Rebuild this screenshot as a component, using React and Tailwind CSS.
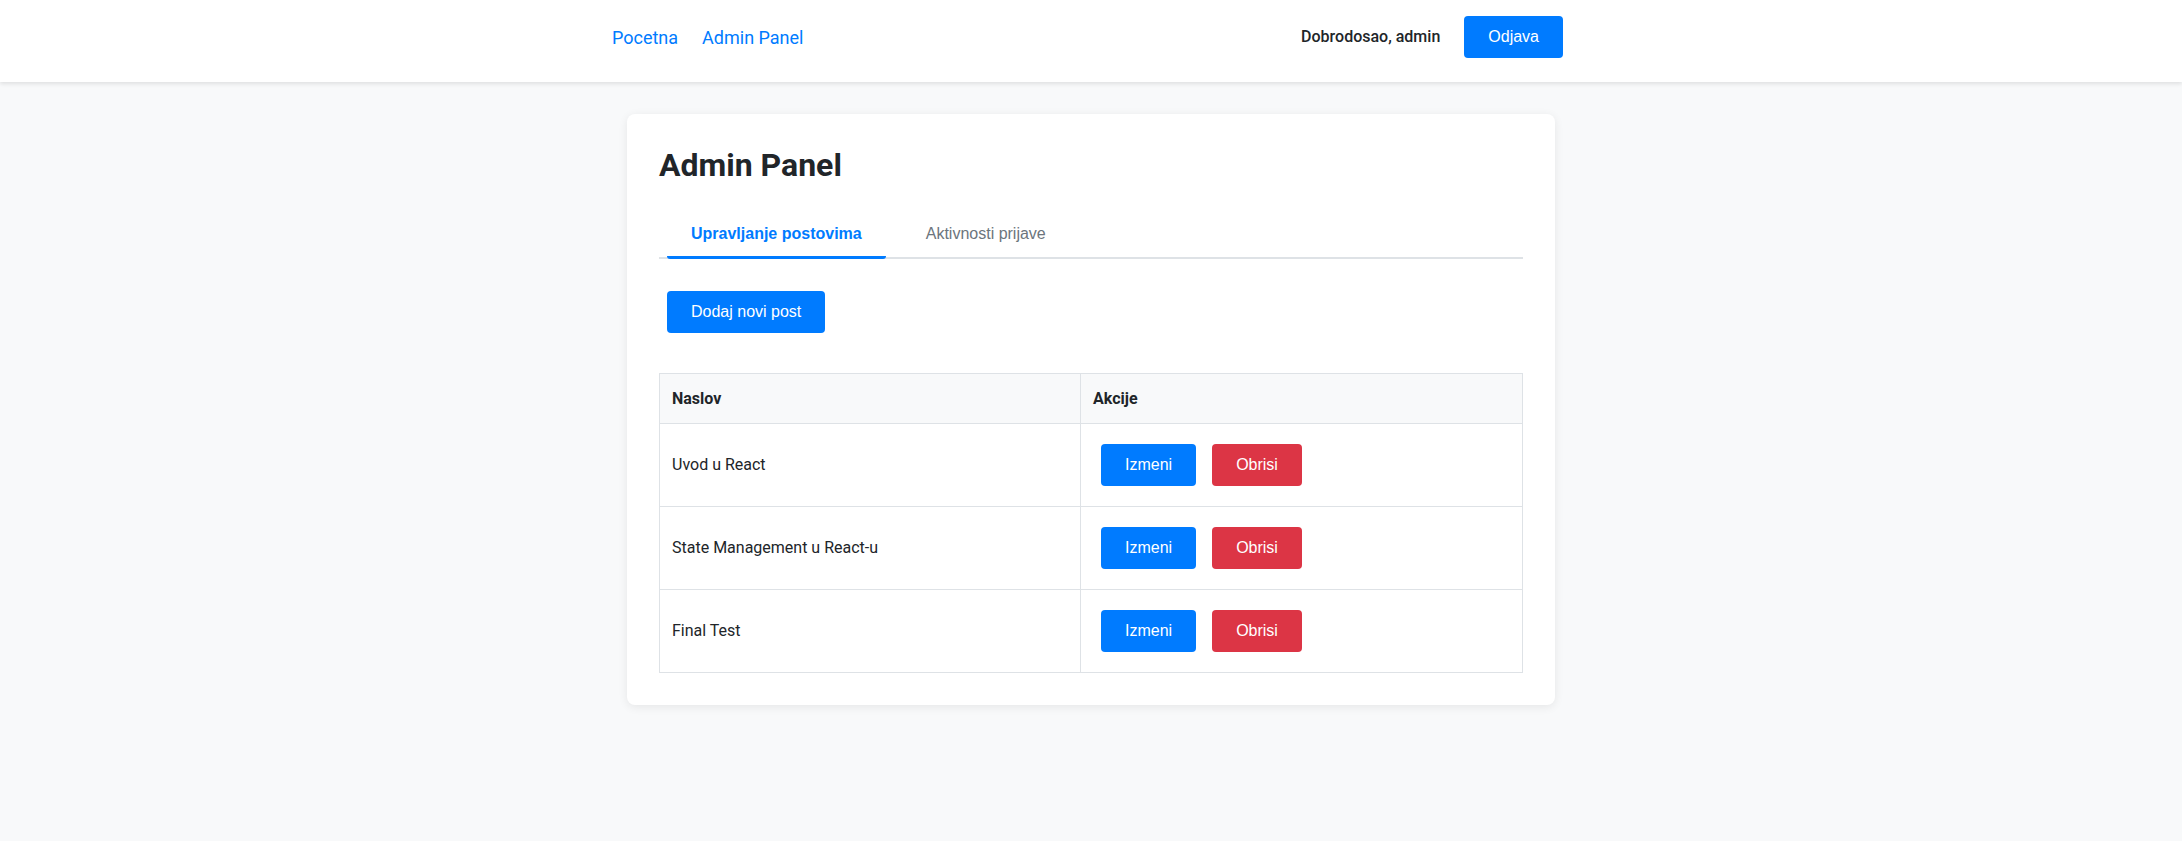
import React from 'react';

const posts = [
  { id: 1, title: 'Uvod u React' },
  { id: 2, title: 'State Management u React-u' },
  { id: 3, title: 'Final Test' },
];

// buttons keep the browser default font (Arial look)
const btn =
  "font-['Liberation_Sans',Arial,sans-serif] text-base leading-[18px] text-white px-6 py-3 rounded-[4px]";

const App = () => {
  return (
    <div className="min-h-screen bg-[#f8f9fa] font-['Roboto',sans-serif] text-[#212529]">
      {/* Top nav */}
      <header className="bg-white pt-4 pb-6 shadow-[0_2px_4px_rgba(0,0,0,0.1)]">
        <div className="mx-auto flex w-[960px] items-center justify-between pr-2">
          <nav className="flex items-center gap-6 pl-px text-[18px] text-[#007bff]">
            <a href="#">Pocetna</a>
            <a href="#">Admin Panel</a>
          </nav>
          <div className="flex items-center gap-6">
            <span className="font-medium">Dobrodosao, admin</span>
            <button className={`${btn} bg-[#007bff]`}>Odjava</button>
          </div>
        </div>
      </header>

      <main className="pt-8">
        <div className="mx-auto w-[928px] rounded-lg bg-white p-8 shadow-[0_2px_10px_rgba(0,0,0,0.08)]">
          <h1 className="mb-[25px] text-[32px] font-bold leading-[1.2]">Admin Panel</h1>

          {/* Tabs */}
          <div className="mb-6 flex border-b-2 border-[#dee2e6]">
            <button className="mx-2 -mb-[2px] rounded-b-[3px] border-b-[3px] border-[#007bff] px-6 pt-4 pb-[13px] font-['Liberation_Sans',Arial,sans-serif] text-base font-bold leading-[18px] text-[#007bff]">
              Upravljanje postovima
            </button>
            <button className="mx-2 -mb-[2px] border-b-[3px] border-transparent px-6 pt-4 pb-[13px] font-['Liberation_Sans',Arial,sans-serif] text-base leading-[18px] text-[#6c757d]">
              Aktivnosti prijave
            </button>
          </div>

          <button className={`${btn} m-2 bg-[#007bff]`}>Dodaj novi post</button>

          <table className="mt-8 w-full border-collapse border border-[#dee2e6] text-base">
            <thead>
              <tr className="bg-[#f8f9fa]">
                <th className="h-[50px] w-[421px] border border-[#dee2e6] px-3 text-left font-bold">Naslov</th>
                <th className="h-[50px] border border-[#dee2e6] px-3 text-left font-bold">Akcije</th>
              </tr>
            </thead>
            <tbody>
              {posts.map((p) => (
                <tr key={p.id}>
                  <td className="border border-[#dee2e6] px-3">{p.title}</td>
                  <td className="border border-[#dee2e6] p-3">
                    <div className="flex">
                      <button className={`${btn} m-2 bg-[#007bff]`}>Izmeni</button>
                      <button className={`${btn} m-2 bg-[#dc3545]`}>Obrisi</button>
                    </div>
                  </td>
                </tr>
              ))}
            </tbody>
          </table>
        </div>
      </main>
    </div>
  );
};

export default App;
